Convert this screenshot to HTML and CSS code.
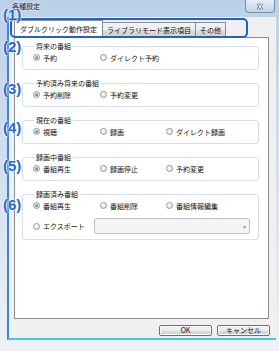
FILE: index.html
```html
<!DOCTYPE html>
<html lang="ja">
<head>
  <meta charset="UTF-8">
  <title>各種設定</title>
  <link rel="stylesheet" href="styles.css">
</head>
<body>

  <div class="titlebar">
    <span class="title">各種設定</span>
    <div class="close">x</div>
  </div>

  <div class="client">
    <!-- Tabs -->
    <div class="tabs">
      <div class="tab active">ダブルクリック動作設定</div>
      <div class="tab">ライブラリモード表示項目</div>
      <div class="tab">その他</div>
    </div>

    <div class="panel">
      <fieldset class="group">
        <legend>将来の番組</legend>
        <div class="row">
          <div class="opt"><span class="radio on"></span>予約</div>
          <div class="opt"><span class="radio"></span>ダイレクト予約</div>
        </div>
      </fieldset>

      <fieldset class="group">
        <legend>予約済み将来の番組</legend>
        <div class="row">
          <div class="opt"><span class="radio on"></span>予約削除</div>
          <div class="opt"><span class="radio"></span>予約変更</div>
        </div>
      </fieldset>

      <fieldset class="group">
        <legend>現在の番組</legend>
        <div class="row">
          <div class="opt"><span class="radio on"></span>視聴</div>
          <div class="opt"><span class="radio"></span>録画</div>
          <div class="opt"><span class="radio"></span>ダイレクト録画</div>
        </div>
      </fieldset>

      <fieldset class="group">
        <legend>録画中番組</legend>
        <div class="row">
          <div class="opt"><span class="radio on"></span>番組再生</div>
          <div class="opt"><span class="radio"></span>録画停止</div>
          <div class="opt"><span class="radio"></span>予約変更</div>
        </div>
      </fieldset>

      <fieldset class="group">
        <legend>録画済み番組</legend>
        <div class="row">
          <div class="opt"><span class="radio on"></span>番組再生</div>
          <div class="opt"><span class="radio"></span>番組削除</div>
          <div class="opt"><span class="radio"></span>番組情報編集</div>
        </div>
        <div class="export-row">
          <div class="opt"><span class="radio"></span>エクスポート</div>
          <div class="select"><span class="arrow">▾</span></div>
        </div>
      </fieldset>
    </div>

    <div class="buttons">
      <div class="btn">OK</div>
      <div class="btn">キャンセル</div>
    </div>
  </div>

  <!-- Callouts drawn over the dialog -->
  <div class="callout-box"></div>
  <div class="num n1">(1)</div>
  <div class="num n2">(2)</div>
  <div class="num n3">(3)</div>
  <div class="num n4">(4)</div>
  <div class="num n5">(5)</div>
  <div class="num n6">(6)</div>

</body>
</html>
```

FILE: styles.css
```css
* {
  box-sizing: border-box;
}

body {
  margin: 0;
  width: 279px;
  height: 351px;
  overflow: hidden;
  position: relative;
  font-family: "Noto Sans CJK JP", sans-serif;
  font-size: 7px;
  color: #111;
  background: linear-gradient(#bcd0e8, #d4e2f1 55%, #eef2f6);
}

.titlebar {
  height: 17px;
  display: flex;
  justify-content: space-between;
}

.title {
  padding: 1px 0 0 12px;
  line-height: 10px;
  color: #222;
  text-shadow: 0 0 3px #fff;
}

.close {
  width: 30px;
  height: 13px;
  margin-right: 4px;
  border: 1px solid #7d8fa8;
  border-top: none;
  border-radius: 0 0 4px 4px;
  background: linear-gradient(#e4ecf6, #c3d3e6);
  display: flex;
  align-items: center;
  justify-content: center;
  font-family: "Liberation Sans", sans-serif;
  font-weight: bold;
  font-size: 9px;
  color: #fff;
  text-shadow: 0 0 1px #222, 0 0 1px #222, 0 0 1px #222;
}

.client {
  width: 269px;
  height: 323px;
  margin-left: 7px;
  padding: 3px 0 0 5px;
  background: #f0f0f0;
  border-left: 2px solid #3a86d8;
  border-bottom: 2px solid #45c8f0;
}

.tabs {
  display: flex;
  align-items: flex-end;
  height: 17px;
  padding-left: 2px;
  position: relative;
  z-index: 1;
}

.tab {
  height: 15px;
  line-height: 14px;
  padding: 0 4px;
  border: 1px solid #898c95;
  border-bottom: none;
  margin-right: -1px;
  background: linear-gradient(#f2f2f2, #ebebeb 50%, #dddddd 51%, #cfcfcf);
  white-space: nowrap;
}

.tab.active {
  height: 18px;
  line-height: 16px;
  padding: 0 5px;
  margin: 0 -1px -1px -2px;
  background: #fff;
  position: relative;
  z-index: 2;
}

.panel {
  width: 255px;
  height: 282px;
  border: 1px solid #898c95;
  background: #fff;
  padding: 3px 9px 0 7px;
}

.group {
  margin: 0 0 8px 0;
  padding: 0 0 5px 10px;
  border: 1px solid #d5dfe5;
  border-radius: 3px;
}

.group legend {
  padding: 0 2px;
  margin-left: 1px;
  line-height: 10px;
}

.row {
  display: grid;
  grid-template-columns: 67px 66px auto;
  height: 13px;
  align-items: center;
}

.opt {
  display: flex;
  align-items: center;
  gap: 3px;
  white-space: nowrap;
}

.radio {
  width: 7px;
  height: 7px;
  border-radius: 50%;
  border: 1px solid #979797;
  background: radial-gradient(circle at 40% 35%, #ffffff, #d6d6d6);
  position: relative;
}

.radio.on::after {
  content: "";
  position: absolute;
  left: 1px;
  top: 1px;
  width: 3px;
  height: 3px;
  border-radius: 50%;
  background: radial-gradient(circle at 40% 35%, #8bc0ee, #1d4f8f);
}

.export-row {
  display: flex;
  align-items: center;
  gap: 9px;
  margin-top: 6px;
  height: 16px;
}

.select {
  width: 156px;
  height: 16px;
  border: 1px solid #c2c2c2;
  border-radius: 2px;
  background: #f4f4f4;
  display: flex;
  justify-content: flex-end;
  align-items: center;
  padding-right: 3px;
}

.arrow {
  color: #9a9a9a;
  font-size: 6px;
}

.buttons {
  width: 256px;
  display: flex;
  justify-content: flex-end;
  gap: 5px;
  margin-top: 6px;
}

.btn {
  width: 53px;
  height: 11px;
  line-height: 9px;
  text-align: center;
  border: 1px solid #707070;
  border-radius: 2px;
  background: linear-gradient(#f2f2f2, #ebebeb 50%, #dddddd 51%, #cfcfcf);
  box-shadow: inset 0 0 0 1px #fcfcfc;
}

.callout-box {
  position: absolute;
  left: 10px;
  top: 18px;
  width: 238px;
  height: 20px;
  border: 2px solid #2560c4;
  border-radius: 5px;
  z-index: 3;
}

.num {
  position: absolute;
  left: 3px;
  font-family: "Liberation Sans", sans-serif;
  font-weight: bold;
  font-size: 15px;
  line-height: 14px;
  color: #2a68c6;
  text-shadow: 0 0 2px #fff, 0 0 2px #fff;
  z-index: 4;
}

.n1 { top: 8px; }
.n2 { top: 40px; }
.n3 { top: 82px; }
.n4 { top: 121px; }
.n5 { top: 159px; }
.n6 { top: 198px; }
```
